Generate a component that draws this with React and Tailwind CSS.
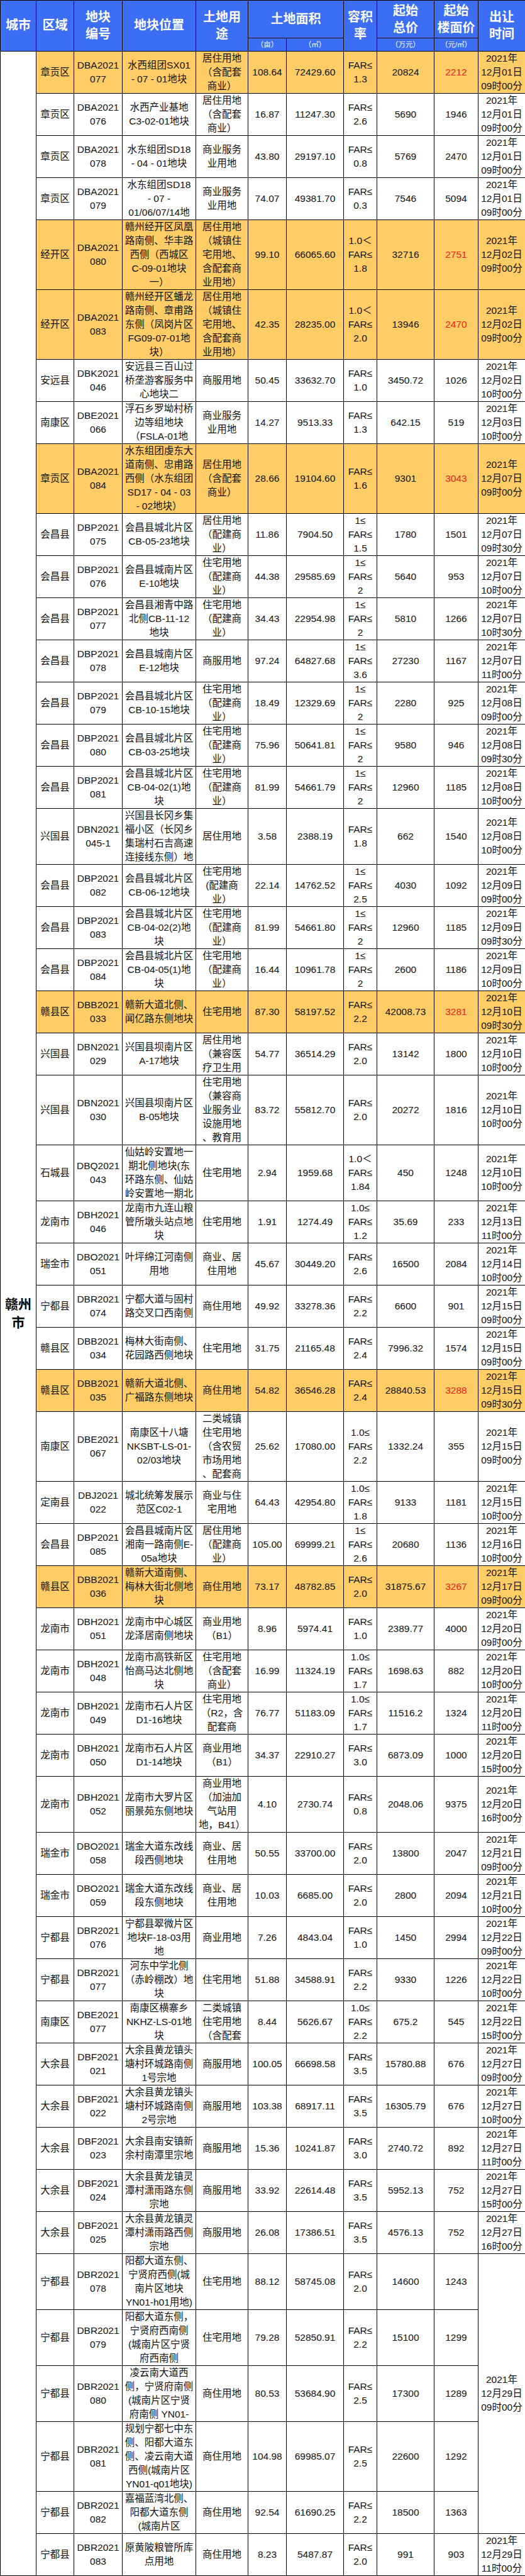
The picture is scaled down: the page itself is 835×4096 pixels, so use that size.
import React from 'react';

const Y = '2021年\n';

// h = number of text lines the row holds; hl = highlighted row (price in red)
const rows = [
  { d: '章贡区', no: 'DBA2021\n077', loc: '水西组团SX01\n- 07 - 01地块', use: '居住用地\n（含配套\n商业）', mu: '108.64', m2: '72429.60', far: 'FAR≤\n1.3', total: '20824', price: '2212', t: '12月01日\n09时00分', h: 3, hl: true },
  { d: '章贡区', no: 'DBA2021\n076', loc: '水西产业基地\nC3-02-01地块', use: '居住用地\n（含配套\n商业）', mu: '16.87', m2: '11247.30', far: 'FAR≤\n2.6', total: '5690', price: '1946', t: '12月01日\n09时00分', h: 3 },
  { d: '章贡区', no: 'DBA2021\n078', loc: '水东组团SD18\n- 04 - 01地块', use: '商业服务\n业用地', mu: '43.80', m2: '29197.10', far: 'FAR≤\n0.8', total: '5769', price: '2470', t: '12月01日\n09时00分', h: 3 },
  { d: '章贡区', no: 'DBA2021\n079', loc: '水东组团SD18\n- 07 -\n01/06/07/14地', use: '商业服务\n业用地', mu: '74.07', m2: '49381.70', far: 'FAR≤\n0.3', total: '7546', price: '5094', t: '12月01日\n09时00分', h: 3 },
  { d: '经开区', no: 'DBA2021\n080', loc: '赣州经开区凤凰\n路南侧、华丰路\n西侧（西城区\nC-09-01地块\n一）', use: '居住用地\n（城镇住\n宅用地、\n含配套商\n业用地）', mu: '99.10', m2: '66065.60', far: '1.0＜\nFAR≤\n1.8', total: '32716', price: '2751', t: '12月02日\n09时00分', h: 5, hl: true },
  { d: '经开区', no: 'DBA2021\n083', loc: '赣州经开区蟠龙\n路南侧、章甫路\n东侧（凤岗片区\nFG09-07-01地\n块）', use: '居住用地\n（城镇住\n宅用地、\n含配套商\n业用地）', mu: '42.35', m2: '28235.00', far: '1.0＜\nFAR≤\n2.0', total: '13946', price: '2470', t: '12月02日\n09时00分', h: 5, hl: true },
  { d: '安远县', no: 'DBK2021\n046', loc: '安远县三百山过\n桥垄游客服务中\n心地块二', use: '商服用地', mu: '50.45', m2: '33632.70', far: 'FAR≤\n1.0', total: '3450.72', price: '1026', t: '12月02日\n10时00分', h: 3 },
  { d: '南康区', no: 'DBE2021\n066', loc: '浮石乡罗坳村桥\n边等组地块\n（FSLA-01地', use: '商业服务\n业用地', mu: '14.27', m2: '9513.33', far: 'FAR≤\n1.3', total: '642.15', price: '519', t: '12月03日\n10时00分', h: 3 },
  { d: '章贡区', no: 'DBA2021\n084', loc: '水东组团虔东大\n道南侧、忠甫路\n西侧（水东组团\nSD17 - 04 - 03\n- 02地块）', use: '居住用地\n（含配套\n商业）', mu: '28.66', m2: '19104.60', far: 'FAR≤\n1.6', total: '9301', price: '3043', t: '12月07日\n09时00分', h: 5, hl: true },
  { d: '会昌县', no: 'DBP2021\n075', loc: '会昌县城北片区\nCB-05-23地块', use: '居住用地\n（配建商\n业）', mu: '11.86', m2: '7904.50', far: '1≤\nFAR≤\n1.5', total: '1780', price: '1501', t: '12月07日\n09时30分', h: 3 },
  { d: '会昌县', no: 'DBP2021\n076', loc: '会昌县城南片区\nE-10地块', use: '住宅用地\n（配建商\n业）', mu: '44.38', m2: '29585.69', far: '1≤\nFAR≤\n2', total: '5640', price: '953', t: '12月07日\n10时00分', h: 3 },
  { d: '会昌县', no: 'DBP2021\n077', loc: '会昌县湘青中路\n北侧CB-11-12\n地块', use: '住宅用地\n（配建商\n业）', mu: '34.43', m2: '22954.98', far: '1≤\nFAR≤\n2', total: '5810', price: '1266', t: '12月07日\n10时30分', h: 3 },
  { d: '会昌县', no: 'DBP2021\n078', loc: '会昌县城南片区\nE-12地块', use: '商服用地', mu: '97.24', m2: '64827.68', far: '1≤\nFAR≤\n3.6', total: '27230', price: '1167', t: '12月07日\n11时00分', h: 3 },
  { d: '会昌县', no: 'DBP2021\n079', loc: '会昌县城北片区\nCB-10-15地块', use: '住宅用地\n（配建商\n业）', mu: '18.49', m2: '12329.69', far: '1≤\nFAR≤\n2', total: '2280', price: '925', t: '12月08日\n09时00分', h: 3 },
  { d: '会昌县', no: 'DBP2021\n080', loc: '会昌县城北片区\nCB-03-25地块', use: '住宅用地\n（配建商\n业）', mu: '75.96', m2: '50641.81', far: '1≤\nFAR≤\n2', total: '9580', price: '946', t: '12月08日\n09时30分', h: 3 },
  { d: '会昌县', no: 'DBP2021\n081', loc: '会昌县城北片区\nCB-04-02(1)地\n块', use: '住宅用地\n（配建商\n业）', mu: '81.99', m2: '54661.79', far: '1≤\nFAR≤\n2', total: '12960', price: '1185', t: '12月08日\n10时00分', h: 3 },
  { d: '兴国县', no: 'DBN2021\n045-1', loc: '兴国县长冈乡集\n福小区（长冈乡\n集瑞村石吉高速\n连接线东侧）地', use: '居住用地', mu: '3.58', m2: '2388.19', far: 'FAR≤\n1.8', total: '662', price: '1540', t: '12月08日\n10时00分', h: 4 },
  { d: '会昌县', no: 'DBP2021\n082', loc: '会昌县城北片区\nCB-06-12地块', use: '住宅用地\n(配建商\n业）', mu: '22.14', m2: '14762.52', far: '1≤\nFAR≤\n2.5', total: '4030', price: '1092', t: '12月09日\n09时00分', h: 3 },
  { d: '会昌县', no: 'DBP2021\n083', loc: '会昌县城北片区\nCB-04-02(2)地\n块', use: '住宅用地\n（配建商\n业）', mu: '81.99', m2: '54661.80', far: '1≤\nFAR≤\n2', total: '12960', price: '1185', t: '12月09日\n09时30分', h: 3 },
  { d: '会昌县', no: 'DBP2021\n084', loc: '会昌县城北片区\nCB-04-05(1)地\n块', use: '住宅用地\n（配建商\n业）', mu: '16.44', m2: '10961.78', far: '1≤\nFAR≤\n2', total: '2600', price: '1186', t: '12月09日\n10时00分', h: 3 },
  { d: '赣县区', no: 'DBB2021\n033', loc: '赣新大道北侧、\n闻亿路东侧地块', use: '住宅用地', mu: '87.30', m2: '58197.52', far: 'FAR≤\n2.2', total: '42008.73', price: '3281', t: '12月10日\n09时30分', h: 3, hl: true },
  { d: '兴国县', no: 'DBN2021\n029', loc: '兴国县坝南片区\nA-17地块', use: '居住用地\n（兼容医\n疗卫生用', mu: '54.77', m2: '36514.29', far: 'FAR≤\n2.0', total: '13142', price: '1800', t: '12月10日\n10时00分', h: 3 },
  { d: '兴国县', no: 'DBN2021\n030', loc: '兴国县坝南片区\nB-05地块', use: '住宅用地\n（兼容商\n业服务业\n设施用地\n、教育用', mu: '83.72', m2: '55812.70', far: 'FAR≤\n2.0', total: '20272', price: '1816', t: '12月10日\n10时00分', h: 5 },
  { d: '石城县', no: 'DBQ2021\n043', loc: '仙姑岭安置地一\n期北侧地块(东\n环路东侧、仙姑\n岭安置地一期北', use: '住宅用地', mu: '2.94', m2: '1959.68', far: '1.0＜\nFAR≤\n1.84', total: '450', price: '1248', t: '12月10日\n10时00分', h: 4 },
  { d: '龙南市', no: 'DBH2021\n046', loc: '龙南市九连山粮\n管所墩头站点地\n块', use: '住宅用地', mu: '1.91', m2: '1274.49', far: '1.0≤\nFAR≤\n1.2', total: '35.69', price: '233', t: '12月13日\n11时00分', h: 3 },
  { d: '瑞金市', no: 'DBO2021\n051', loc: '叶坪绵江河南侧\n用地', use: '商业、居\n住用地', mu: '45.67', m2: '30449.20', far: 'FAR≤\n2.6', total: '16500', price: '2084', t: '12月14日\n10时00分', h: 3 },
  { d: '宁都县', no: 'DBR2021\n074', loc: '宁都大道与固村\n路交叉口西南侧', use: '商住用地', mu: '49.92', m2: '33278.36', far: 'FAR≤\n2.2', total: '6600', price: '901', t: '12月15日\n09时00分', h: 3 },
  { d: '赣县区', no: 'DBB2021\n034', loc: '梅林大街南侧、\n花园路西侧地块', use: '住宅用地', mu: '31.75', m2: '21165.48', far: 'FAR≤\n2.4', total: '7996.32', price: '1574', t: '12月15日\n09时00分', h: 3 },
  { d: '赣县区', no: 'DBB2021\n035', loc: '赣新大道北侧、\n广福路东侧地块', use: '商住用地', mu: '54.82', m2: '36546.28', far: 'FAR≤\n2.4', total: '28840.53', price: '3288', t: '12月15日\n09时30分', h: 3, hl: true },
  { d: '南康区', no: 'DBE2021\n067', loc: '南康区十八塘\nNKSBT-LS-01-\n02/03地块', use: '二类城镇\n住宅用地\n（含农贸\n市场用地\n、配套商', mu: '25.62', m2: '17080.00', far: '1.0≤\nFAR≤\n2.2', total: '1332.24', price: '355', t: '12月15日\n09时00分', h: 5 },
  { d: '定南县', no: 'DBJ2021\n022', loc: '城北统筹发展示\n范区C02-1', use: '商业与住\n宅用地', mu: '64.43', m2: '42954.80', far: '1.0≤\nFAR≤\n1.8', total: '9133', price: '1181', t: '12月15日\n10时00分', h: 3 },
  { d: '会昌县', no: 'DBP2021\n085', loc: '会昌县城南片区\n湘南一路南侧E-\n05a地块', use: '居住用地\n（配建商\n业）', mu: '105.00', m2: '69999.21', far: '1≤\nFAR≤\n2.6', total: '20680', price: '1136', t: '12月16日\n10时00分', h: 3 },
  { d: '赣县区', no: 'DBB2021\n036', loc: '赣新大道南侧、\n梅林大街北侧地\n块', use: '商住用地', mu: '73.17', m2: '48782.85', far: 'FAR≤\n2.0', total: '31875.67', price: '3267', t: '12月17日\n09时00分', h: 3, hl: true },
  { d: '龙南市', no: 'DBH2021\n051', loc: '龙南市中心城区\n龙泽居南侧地块', use: '商业用地\n（B1）', mu: '8.96', m2: '5974.41', far: 'FAR≤\n1.0', total: '2389.77', price: '4000', t: '12月20日\n09时00分', h: 3 },
  { d: '龙南市', no: 'DBH2021\n048', loc: '龙南市高铁新区\n怡高马达北侧地\n块', use: '住宅用地\n（含配套\n商业）', mu: '16.99', m2: '11324.19', far: '1.0≤\nFAR≤\n1.7', total: '1698.63', price: '882', t: '12月20日\n10时00分', h: 3 },
  { d: '龙南市', no: 'DBH2021\n049', loc: '龙南市石人片区\nD1-16地块', use: '住宅用地\n（R2，含\n配套商', mu: '76.77', m2: '51183.09', far: '1.0≤\nFAR≤\n1.7', total: '11516.2', price: '1324', t: '12月20日\n11时00分', h: 3 },
  { d: '龙南市', no: 'DBH2021\n050', loc: '龙南市石人片区\nD1-14地块', use: '商业用地\n（B1）', mu: '34.37', m2: '22910.27', far: 'FAR≤\n3.0', total: '6873.09', price: '1000', t: '12月20日\n15时00分', h: 3 },
  { d: '龙南市', no: 'DBH2021\n052', loc: '龙南市大罗片区\n丽景苑东侧地块', use: '商业用地\n（加油加\n气站用\n地，B41）', mu: '4.10', m2: '2730.74', far: 'FAR≤\n0.8', total: '2048.06', price: '9375', t: '12月20日\n16时00分', h: 4 },
  { d: '瑞金市', no: 'DBO2021\n058', loc: '瑞金大道东改线\n段西侧地块', use: '商业、居\n住用地', mu: '50.55', m2: '33700.00', far: 'FAR≤\n2.0', total: '13800', price: '2047', t: '12月21日\n09时00分', h: 3 },
  { d: '瑞金市', no: 'DBO2021\n059', loc: '瑞金大道东改线\n段东侧地块', use: '商业、居\n住用地', mu: '10.03', m2: '6685.00', far: 'FAR≤\n2.0', total: '2800', price: '2094', t: '12月21日\n10时00分', h: 3 },
  { d: '宁都县', no: 'DBR2021\n076', loc: '宁都县翠微片区\n地块F-18-03用\n地', use: '商业用地', mu: '7.26', m2: '4843.04', far: 'FAR≤\n1.0', total: '1450', price: '2994', t: '12月22日\n09时00分', h: 3 },
  { d: '宁都县', no: 'DBR2021\n077', loc: '河东中学北侧\n（赤岭棚改）地\n块', use: '住宅用地', mu: '51.88', m2: '34588.91', far: 'FAR≤\n2.2', total: '9330', price: '1226', t: '12月22日\n10时00分', h: 3 },
  { d: '南康区', no: 'DBE2021\n077', loc: '南康区横寨乡\nNKHZ-LS-01地\n块', use: '二类城镇\n住宅用地\n（含配套', mu: '8.44', m2: '5626.67', far: '1.0≤\nFAR≤\n2.2', total: '675.2', price: '545', t: '12月22日\n15时00分', h: 3 },
  { d: '大余县', no: 'DBF2021\n021', loc: '大余县黄龙镇头\n塘村环城路南侧\n1号宗地', use: '商服用地', mu: '100.05', m2: '66698.58', far: 'FAR≤\n3.5', total: '15780.88', price: '676', t: '12月27日\n09时00分', h: 3 },
  { d: '大余县', no: 'DBF2021\n022', loc: '大余县黄龙镇头\n塘村环城路南侧\n2号宗地', use: '商服用地', mu: '103.38', m2: '68917.11', far: 'FAR≤\n3.5', total: '16305.79', price: '676', t: '12月27日\n10时00分', h: 3 },
  { d: '大余县', no: 'DBF2021\n023', loc: '大余县南安镇新\n余村南潭里宗地', use: '商服用地', mu: '15.36', m2: '10241.87', far: 'FAR≤\n3.0', total: '2740.72', price: '892', t: '12月27日\n11时00分', h: 3 },
  { d: '大余县', no: 'DBF2021\n024', loc: '大余县黄龙镇灵\n潭村潇雨路东侧\n宗地', use: '商服用地', mu: '33.92', m2: '22614.48', far: 'FAR≤\n3.5', total: '5952.13', price: '752', t: '12月27日\n15时00分', h: 3 },
  { d: '大余县', no: 'DBF2021\n025', loc: '大余县黄龙镇灵\n潭村潇雨路西侧\n宗地', use: '商服用地', mu: '26.08', m2: '17386.51', far: 'FAR≤\n3.5', total: '4576.13', price: '752', t: '12月27日\n16时00分', h: 3 },
  { d: '宁都县', no: 'DBR2021\n078', loc: '阳都大道东侧、\n宁贤府西侧(城\n南片区地块\nYN01-h01用地)', use: '住宅用地', mu: '88.12', m2: '58745.08', far: 'FAR≤\n2.0', total: '14600', price: '1243', t: '12月29日\n09时00分', span: 5, h: 4 },
  { d: '宁都县', no: 'DBR2021\n079', loc: '阳都大道东侧，\n宁贤府西南侧\n(城南片区宁贤\n府西南侧', use: '住宅用地', mu: '79.28', m2: '52850.91', far: 'FAR≤\n2.2', total: '15100', price: '1299', t: null, h: 4 },
  { d: '宁都县', no: 'DBR2021\n080', loc: '凌云南大道西\n侧，宁贤府南侧\n(城南片区宁贤\n府南侧 YN01-', use: '商住用地', mu: '80.53', m2: '53684.90', far: 'FAR≤\n2.5', total: '17300', price: '1289', t: null, h: 4 },
  { d: '宁都县', no: 'DBR2021\n081', loc: '规划宁都七中东\n侧、阳都大道东\n侧、凌云南大道\n西侧(城南片区\nYN01-q01地块)', use: '商住用地', mu: '104.98', m2: '69985.07', far: 'FAR≤\n2.5', total: '22600', price: '1292', t: null, h: 5 },
  { d: '宁都县', no: 'DBR2021\n082', loc: '嘉福蓝湾北侧、\n阳都大道东侧\n(城南片区', use: '商住用地', mu: '92.54', m2: '61690.25', far: 'FAR≤\n2.2', total: '18500', price: '1363', t: null, h: 3 },
  { d: '宁都县', no: 'DBR2021\n083', loc: '原黄陂粮管所库\n点用地', use: '商住用地', mu: '8.23', m2: '5487.87', far: 'FAR≤\n2.0', total: '991', price: '903', t: '12月29日\n11时00分', h: 3 },
];

const rowH = { 3: 'h-[67px]', 4: 'h-[89px]', 5: 'h-[111px]' };

function Td({ children, className = '', rowSpan }) {
  return (
    <td rowSpan={rowSpan} className={`border border-black p-0 text-center align-middle ${className}`}>
      <div className="overflow-hidden whitespace-pre">{children}</div>
    </td>
  );
}

function Th({ children, rowSpan, colSpan, className = '' }) {
  return (
    <th
      rowSpan={rowSpan}
      colSpan={colSpan}
      className={`border border-black bg-[#3b6ef5] p-0 text-center align-middle font-bold text-white whitespace-pre ${className}`}
    >
      {children}
    </th>
  );
}

export default function App() {
  return (
    <div className="w-[835px] bg-white font-['Liberation_Sans','Noto_Sans_CJK_SC',sans-serif] text-[#111]">
      <table className="w-[835px] table-fixed border-collapse text-[15.5px] leading-[22px]">
        <colgroup>
          <col className="w-[57px]" />
          <col className="w-[60px]" />
          <col className="w-[77px]" />
          <col className="w-[117px]" />
          <col className="w-[83px]" />
          <col className="w-[61px]" />
          <col className="w-[91px]" />
          <col className="w-[53px]" />
          <col className="w-[91px]" />
          <col className="w-[70px]" />
          <col className="w-[75px]" />
        </colgroup>
        <thead>
          <tr className="h-[60px] text-[20px] leading-[27px]">
            <Th rowSpan={2}>城市</Th>
            <Th rowSpan={2}>区域</Th>
            <Th rowSpan={2}>{'地块\n编号'}</Th>
            <Th rowSpan={2}>地块位置</Th>
            <Th rowSpan={2}>{'土地用\n途'}</Th>
            <Th colSpan={2}>土地面积</Th>
            <Th rowSpan={2}>{'容积\n率'}</Th>
            <Th>{'起始\n总价'}</Th>
            <Th>{'起始\n楼面价'}</Th>
            <Th rowSpan={2}>{'出让\n时间'}</Th>
          </tr>
          <tr className="h-[20.5px] text-[11.5px] leading-[16px]">
            <Th className="font-normal">（亩）</Th>
            <Th className="font-normal">（㎡）</Th>
            <Th className="font-normal">（万元）</Th>
            <Th className="font-normal">（元/㎡）</Th>
          </tr>
        </thead>
        <tbody>
          {rows.map((r, i) => {
            const bg = r.hl ? 'bg-[#ffcc66]' : '';
            return (
              <tr key={i} className={rowH[r.h]}>
                {i === 0 && (
                  <Td rowSpan={rows.length} className="bg-white text-[21px] leading-[29px] font-bold text-black">
                    {'赣州\n市'}
                  </Td>
                )}
                <Td className={bg}>{r.d}</Td>
                <Td className={bg}>{r.no}</Td>
                <Td className={bg}>{r.loc}</Td>
                <Td className={bg}>{r.use}</Td>
                <Td className={bg}>{r.mu}</Td>
                <Td className={bg}>{r.m2}</Td>
                <Td className={bg}>{r.far}</Td>
                <Td className={bg}>{r.total}</Td>
                <Td className={`${bg} ${r.hl ? 'text-[#e8231e]' : ''}`}>{r.price}</Td>
                {r.t && (
                  <Td rowSpan={r.span} className={bg}>
                    {Y + r.t}
                  </Td>
                )}
              </tr>
            );
          })}
        </tbody>
      </table>
    </div>
  );
}
